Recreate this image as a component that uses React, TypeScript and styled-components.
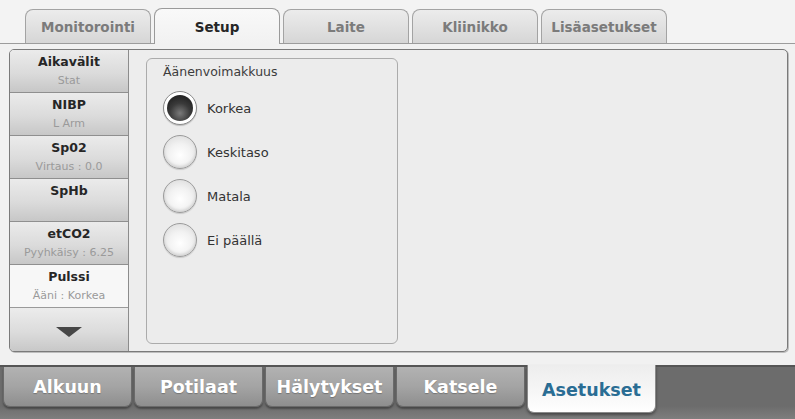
import React from "react";
import styled, { createGlobalStyle, css } from "styled-components";

const Global = createGlobalStyle`
  html, body { margin: 0; padding: 0; background: #f1f1f1; }
  body { font-family: "DejaVu Sans", Verdana, sans-serif; }
  #root { width: 795px; height: 419px; overflow: hidden; }
`;

const Page = styled.div`
  width: 795px;
  height: 419px;
  display: flex;
  flex-direction: column;
  background: #f1f1f1;
`;

const TabBar = styled.div`
  height: 43px;
  border-bottom: 1px solid #9c9c9c;
  display: flex;
  align-items: flex-end;
  gap: 3px;
  padding-left: 25px;
  background: #f3f3f3;
`;

const Tab = styled.div<{ $active?: boolean }>`
  width: 126px;
  height: 34px;
  box-sizing: border-box;
  border: 1px solid #a3a3a3;
  border-bottom: none;
  border-radius: 8px 8px 0 0;
  display: flex;
  align-items: center;
  justify-content: center;
  font-weight: bold;
  font-size: 13.5px;
  color: #7b7b7b;
  background: linear-gradient(#ececec, #d6d6d6);
  ${(p) =>
    p.$active &&
    css`
      height: 36px;
      margin-bottom: -1px;
      color: #262626;
      background: linear-gradient(#f9f9f9, #f1f1f1);
      border-color: #9a9a9a;
    `}
`;

const Main = styled.div`
  flex: 1;
  display: flex;
  padding: 5px 7px 13px 9px;
`;

const Panel = styled.div`
  flex: 1;
  display: flex;
  border: 1px solid #7a7a7a;
  border-radius: 5px;
  background: #ededed;
  overflow: hidden;
  box-shadow: 1px 1px 0 #bdbdbd;
`;

const List = styled.div`
  width: 118px;
  display: flex;
  flex-direction: column;
  border-right: 1px solid #8c8c8c;
`;

const Item = styled.div<{ $selected?: boolean }>`
  height: 43px;
  box-sizing: border-box;
  display: flex;
  flex-direction: column;
  align-items: center;
  padding-top: 4px;
  border-bottom: 1px solid #8f8f8f;
  background: linear-gradient(#ebebeb 0%, #dbdbdb 55%, #c7c7c7 100%);
  ${(p) =>
    p.$selected &&
    css`
      background: #f7f7f7;
      border-bottom-color: #9a9a9a;
    `}
`;

const ItemTitle = styled.div`
  font-weight: bold;
  font-size: 12.5px;
  color: #262626;
  line-height: 16px;
`;

const ItemSub = styled.div`
  font-size: 11px;
  color: #9a9a9a;
  line-height: 14px;
  margin-top: 4px;
`;

const ArrowButton = styled.div`
  flex: 1;
  display: flex;
  align-items: center;
  justify-content: center;
  padding-top: 4px;
  background: linear-gradient(#ececec 0%, #dcdcdc 55%, #c8c8c8 100%);
`;

const Group = styled.div`
  width: 252px;
  margin: 8px 0 7px 17px;
  box-sizing: border-box;
  border: 1px solid #ababab;
  border-radius: 6px;
  background: #ececec;
  padding: 5px 0 0 16px;
`;

const GroupTitle = styled.div`
  font-size: 12.5px;
  color: #3c3c3c;
  line-height: 16px;
  margin-bottom: 6px;
`;

const RadioRow = styled.div`
  height: 44px;
  display: flex;
  align-items: center;
  gap: 10px;
`;

const RadioCircle = styled.div<{ $checked?: boolean }>`
  width: 34px;
  height: 34px;
  box-sizing: border-box;
  border-radius: 50%;
  border: 1px solid #9b9b9b;
  background: radial-gradient(circle at 50% 60%, #ffffff 0%, #f2f2f2 45%, #d6d6d6 100%);
  box-shadow: inset 0 -2px 3px rgba(0, 0, 0, 0.12), 0 1px 1px rgba(0, 0, 0, 0.15);
  display: flex;
  align-items: center;
  justify-content: center;
  ${(p) =>
    p.$checked &&
    css`
      border-color: #8a8a8a;
      background: #ffffff;
      box-shadow: 0 1px 1px rgba(0, 0, 0, 0.2);
      &::after {
        content: "";
        width: 26px;
        height: 26px;
        border-radius: 50%;
        background: radial-gradient(circle at 50% 70%, #7a7a7a 0%, #3a3a3a 45%, #151515 100%);
      }
    `}
`;

const RadioLabel = styled.span`
  font-size: 13px;
  color: #333;
`;

const BottomNav = styled.div`
  height: 54px;
  box-sizing: border-box;
  border-top: 2px solid #555;
  background: linear-gradient(#6c6c6c 0%, #6c6c6c 75%, #7e7e7e 100%);
  display: flex;
  align-items: flex-start;
  gap: 2px;
  padding-left: 3px;
`;

const NavButton = styled.div<{ $active?: boolean }>`
  width: 129px;
  height: 40px;
  box-sizing: border-box;
  border: 1px solid #6a6a6a;
  border-top: none;
  border-radius: 0 0 7px 7px;
  background: linear-gradient(#b2b2b2 0%, #a4a4a4 50%, #8e8e8e 100%);
  box-shadow: 0 2px 2px rgba(0, 0, 0, 0.35);
  display: flex;
  align-items: center;
  justify-content: center;
  font-weight: bold;
  font-size: 17.5px;
  color: #ffffff;
  text-shadow: 0 1px 1px rgba(0, 0, 0, 0.25);
  ${(p) =>
    p.$active &&
    css`
      height: 48px;
      margin-top: -2px;
      padding-top: 2px;
      border-color: #8a8a8a;
      background: linear-gradient(#ededed 0%, #f7f7f7 60%, #ffffff 100%);
      color: #2a6d94;
      text-shadow: none;
      box-shadow: 0 2px 3px rgba(0, 0, 0, 0.4);
    `}
`;

const tabs = ["Monitorointi", "Setup", "Laite", "Kliinikko", "Lisäasetukset"];
const items = [
  { t: "Aikavälit", s: "Stat" },
  { t: "NIBP", s: "L Arm" },
  { t: "Sp02", s: "Virtaus : 0.0" },
  { t: "SpHb", s: "" },
  { t: "etCO2", s: "Pyyhkäisy : 6.25" },
  { t: "Pulssi", s: "Ääni : Korkea", sel: true },
];
const radios = ["Korkea", "Keskitaso", "Matala", "Ei päällä"];
const nav = ["Alkuun", "Potilaat", "Hälytykset", "Katsele", "Asetukset"];

export default function App() {
  return (
    <Page>
      <Global />
      <TabBar>
        {tabs.map((t) => (
          <Tab key={t} $active={t === "Setup"}>
            {t}
          </Tab>
        ))}
      </TabBar>
      <Main>
        <Panel>
          <List>
            {items.map((it) => (
              <Item key={it.t} $selected={it.sel}>
                <ItemTitle>{it.t}</ItemTitle>
                {it.s && <ItemSub>{it.s}</ItemSub>}
              </Item>
            ))}
            <ArrowButton>
              <svg width="26" height="10" viewBox="0 0 26 10">
                <polygon points="0,0 26,0 13,10" fill="#474747" />
              </svg>
            </ArrowButton>
          </List>
          <Group>
            <GroupTitle>Äänenvoimakkuus</GroupTitle>
            {radios.map((r, i) => (
              <RadioRow key={r}>
                <RadioCircle $checked={i === 0} />
                <RadioLabel>{r}</RadioLabel>
              </RadioRow>
            ))}
          </Group>
        </Panel>
      </Main>
      <BottomNav>
        {nav.map((n) => (
          <NavButton key={n} $active={n === "Asetukset"}>
            {n}
          </NavButton>
        ))}
      </BottomNav>
    </Page>
  );
}
